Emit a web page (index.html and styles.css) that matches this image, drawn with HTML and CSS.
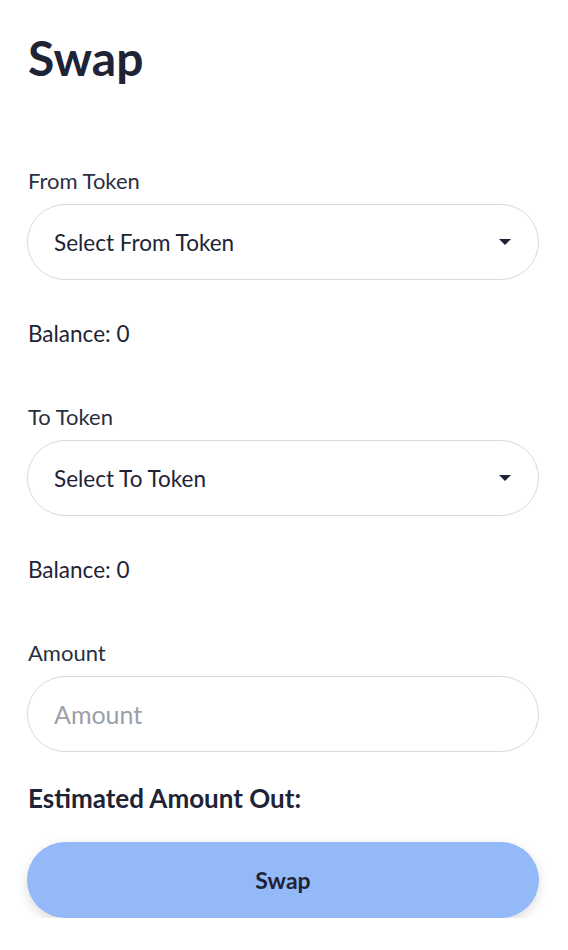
FILE: index.html
```html
<!DOCTYPE html>
<html>
<head>
<meta charset="utf-8">
<link rel="stylesheet" href="styles.css">
</head>
<body>
<main class="page">
  <h1 class="title">Swap</h1>
  <div class="field">
    <label class="label">From Token</label>
    <div class="select">
      <span class="select-text">Select From Token</span>
      <span class="caret"></span>
    </div>
  </div>
  <p class="balance">Balance: 0</p>
  <div class="field field-gap">
    <label class="label">To Token</label>
    <div class="select">
      <span class="select-text">Select To Token</span>
      <span class="caret"></span>
    </div>
  </div>
  <p class="balance">Balance: 0</p>
  <div class="field field-gap">
    <label class="label">Amount</label>
    <input class="input" type="text" placeholder="Amount">
  </div>
  <p class="estimate">Estimated Amount Out:</p>
  <button class="swap-btn">Swap</button>
</main>
</body>
</html>
```
FILE: styles.css
```css
* { box-sizing: border-box; }
html, body { margin: 0; padding: 0; background: #ffffff; }
body {
  font-family: Lato, "Noto Sans", sans-serif;
  color: #1e2336;
}
.page {
  display: flex;
  flex-direction: column;
  padding: 29px 29px 0 28px;
}
.title {
  margin: 0;
  font-size: 48px;
  line-height: 58px;
  font-weight: 700;
  color: #1e2336;
}
.field {
  display: flex;
  flex-direction: column;
  gap: 11px;
  margin-top: 82px;
}
.field-gap { margin-top: 59px; }
.label {
  font-size: 22px;
  line-height: 24px;
  color: #2a3042;
}
.select {
  height: 76px;
  border: 1px solid #d9d9dc;
  border-radius: 38px;
  display: flex;
  align-items: center;
  justify-content: space-between;
  padding: 0 27px 0 26px;
  margin-left: -1px;
}
.select-text {
  font-size: 22.5px;
  color: #1e2336;
}
.caret {
  width: 0;
  height: 0;
  border-left: 6px solid transparent;
  border-right: 6px solid transparent;
  border-top: 6px solid #1e2336;
}
.input {
  height: 76px;
  border: 1px solid #d9d9dc;
  border-radius: 38px;
  padding: 0 26px;
  margin-left: -1px;
  font-family: inherit;
  font-size: 25px;
  color: #1e2336;
  outline: none;
}
.input::placeholder { color: #9ca0a9; }
.balance {
  margin: 42px 0 0 0;
  font-size: 22.5px;
  line-height: 24px;
  color: #1e2336;
}
.estimate {
  margin: 34px 0 0 0;
  font-size: 26px;
  line-height: 24px;
  font-weight: 700;
  color: #1e2336;
}
.swap-btn {
  margin-top: 32px;
  margin-left: -1px;
  height: 76px;
  border: none;
  border-radius: 38px;
  background: #93b9f8;
  box-shadow: 0 4px 12px rgba(0,0,0,0.14);
  font-family: inherit;
  font-size: 23px;
  font-weight: 700;
  color: #1e2336;
}
```
